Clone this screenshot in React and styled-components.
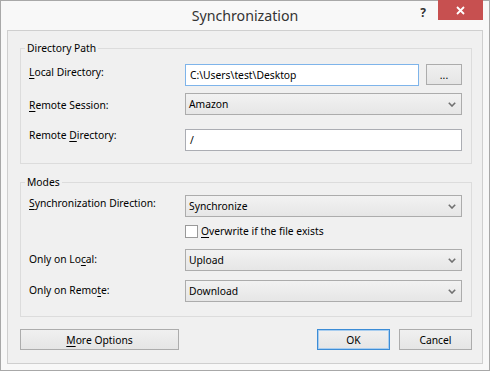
import React from "react";
import styled, { createGlobalStyle } from "styled-components";

const Global = createGlobalStyle`
  html, body { margin: 0; padding: 0; background: #ffffff; }
  body {
    font-family: "Noto Sans", "Open Sans", sans-serif;
    font-size: 10.3px;
    color: #000;
  }
  * { box-sizing: border-box; }
`;

const Window = styled.div`
  width: 490px;
  height: 371px;
  border: 1px solid #a8a8a8;
  background: #f8f8f8;
  padding: 0 6px 6px;
  display: flex;
  flex-direction: column;
`;

const TitleBar = styled.div`
  height: 29px;
  display: grid;
  grid-template-columns: 1fr auto 1fr;
  align-items: start;
`;

const Title = styled.div`
  grid-column: 2;
  font-size: 14.2px;
  line-height: 30px;
  color: #333;
`;

const Controls = styled.div`
  grid-column: 3;
  justify-self: end;
  display: flex;
  align-items: flex-start;
`;

const Help = styled.span`
  font-size: 12px;
  font-weight: bold;
  color: #333;
  line-height: 16px;
  margin-top: 4px;
  margin-right: 12px;
`;

const Close = styled.div`
  width: 45px;
  height: 20px;
  margin-top: -1px;
  background: #c75050;
  display: flex;
  align-items: center;
  justify-content: center;
`;

const Client = styled.div`
  height: 334px;
  border: 1px solid #cfcfcf;
  background: #f0f0f0;
  padding: 9px 10px 13px 12px;
  display: flex;
  flex-direction: column;
`;

const Group = styled.fieldset`
  margin: 0 0 ${(p) => p.$mb}px;
  border: 1px solid #dcdcdc;
  padding: ${(p) => p.$pt}px 9px ${(p) => p.$pb}px 8px;
  min-width: 0;
`;

const Legend = styled.legend`
  padding: 0 2px;
  margin-left: -4px;
  line-height: 16px;
`;

const Row = styled.div`
  display: grid;
  grid-template-columns: 156px 1fr;
  align-items: start;
  margin-top: ${(p) => p.$mt || 0}px;
`;

const Label = styled.div`
  grid-column: 1;
  line-height: 16px;
  margin-top: ${(p) => p.$off || 0}px;
  white-space: nowrap;
`;

const U = styled.span`
  text-decoration: underline;
  text-underline-offset: 2px;
`;

const Field = styled.div`
  grid-column: 2;
  display: flex;
  gap: 7px;
`;

const TextBox = styled.div`
  flex: 1;
  height: ${(p) => p.$h || 22}px;
  background: #fff;
  border: 1px solid ${(p) => (p.$focus ? "#7eb4ea" : "#abadb3")};
  padding: 0 4px;
  line-height: ${(p) => (p.$h || 22) - 2}px;
  white-space: nowrap;
`;

const Combo = styled.div`
  flex: 1;
  height: ${(p) => p.$h || 22}px;
  background: linear-gradient(#f2f2f2, #e6e6e6);
  border: 1px solid #acacac;
  padding: 0 5px 0 3px;
  display: flex;
  align-items: center;
  justify-content: space-between;
`;

const Button = styled.div`
  width: ${(p) => p.$w}px;
  height: 21px;
  background: linear-gradient(#f0f0f0, #e5e5e5);
  border: 1px solid ${(p) => (p.$def ? "#3c8cd6" : "#acacac")};
  box-shadow: ${(p) => (p.$def ? "inset 0 0 0 1px #a8cdef" : "none")};
  display: flex;
  align-items: center;
  justify-content: center;
  line-height: 16px;
`;

const CheckRow = styled.label`
  grid-column: 2;
  display: flex;
  align-items: center;
  gap: 3px;
  line-height: 16px;
`;

const Box = styled.span`
  width: 13px;
  height: 13px;
  border: 1px solid #999;
  background: #fff;
`;

const Footer = styled.div`
  display: flex;
  align-items: center;
  gap: 9px;
`;

const Spacer = styled.div`
  flex: 1;
`;

const Chevron = () => (
  <svg width="8" height="5" viewBox="0 0 8 5">
    <path d="M0.8 0.8 L4 4 L7.2 0.8" fill="none" stroke="#707070" strokeWidth="1.6" />
  </svg>
);

const ComboBox = ({ value, h }) => (
  <Combo $h={h}>
    <span>{value}</span>
    <Chevron />
  </Combo>
);

export default function App() {
  return (
    <>
      <Global />
      <Window>
        <TitleBar>
          <Title>Synchronization</Title>
          <Controls>
            <Help>?</Help>
            <Close>
              <svg width="9" height="9" viewBox="0 0 9 9">
                <path d="M1 1 L8 8 M8 1 L1 8" stroke="#fff" strokeWidth="1.8" />
              </svg>
            </Close>
          </Controls>
        </TitleBar>
        <Client>
          <Group $pt={8} $pb={12} $mb={10}>
            <Legend>Directory Path</Legend>
            <Row>
              <Label $off={0}>
                <U>L</U>ocal Directory:
              </Label>
              <Field>
                <TextBox $focus>C:\Users\test\Desktop</TextBox>
                <Button $w={36}>...</Button>
              </Field>
            </Row>
            <Row $mt={7}>
              <Label $off={4}>
                <U>R</U>emote Session:
              </Label>
              <Field>
                <ComboBox value="Amazon" />
              </Field>
            </Row>
            <Row $mt={14}>
              <Label $off={-2}>
                Remote <U>D</U>irectory:
              </Label>
              <Field>
                <TextBox>/</TextBox>
              </Field>
            </Row>
          </Group>
          <Group $pt={5} $pb={14} $mb={12}>
            <Legend>Modes</Legend>
            <Row>
              <Label $off={0}>
                <U>S</U>ynchronization Direction:
              </Label>
              <Field>
                <ComboBox value="Synchronize" />
              </Field>
            </Row>
            <Row $mt={6}>
              <CheckRow>
                <Box />
                <span>
                  <U>O</U>verwrite if the file exists
                </span>
              </CheckRow>
            </Row>
            <Row $mt={10}>
              <Label $off={2}>
                Only on Lo<U>c</U>al:
              </Label>
              <Field>
                <ComboBox value="Upload" />
              </Field>
            </Row>
            <Row $mt={9}>
              <Label $off={2}>
                Only on Remo<U>t</U>e:
              </Label>
              <Field>
                <ComboBox value="Download" />
              </Field>
            </Row>
          </Group>
          <Footer>
            <Button $w={159}>
              <span>
                <U>M</U>ore Options
              </span>
            </Button>
            <Spacer />
            <Button $w={73} $def>
              OK
            </Button>
            <Button $w={73}>Cancel</Button>
          </Footer>
        </Client>
      </Window>
    </>
  );
}
